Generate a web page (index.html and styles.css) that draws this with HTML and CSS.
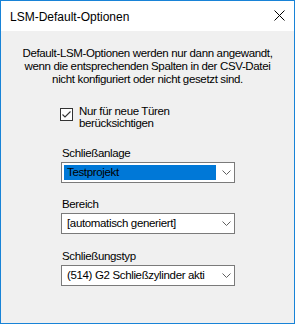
FILE: index.html
```html
<!DOCTYPE html>
<html lang="de">
<head>
  <meta charset="UTF-8" />
  <meta name="viewport" content="width=device-width, initial-scale=1.0"/>
  <title>LSM-Default-Optionen</title>
  <link rel="stylesheet" href="styles.css">
</head>
<body>

  <div class="window">
    <!-- Title bar -->
    <div class="titlebar">
      <span class="title">LSM-Default-Optionen</span>
      <span class="close">
        <svg width="11" height="11" viewBox="0 0 11 11">
          <path d="M0.5 0.5 L10.5 10.5 M10.5 0.5 L0.5 10.5" stroke="#000" stroke-width="1" fill="none"/>
        </svg>
      </span>
    </div>

    <div class="content">
      <p class="info">Default-LSM-Optionen werden nur dann angewandt,<br>wenn die entsprechenden Spalten in der CSV-Datei<br>nicht konfiguriert oder nicht gesetzt sind.</p>

      <div class="fields">
        <label class="check">
          <span class="box">
            <svg width="11" height="11" viewBox="0 0 11 11">
              <path d="M1.5 5.5 L4 8 L9.5 2.5" stroke="#333" stroke-width="1.1" fill="none"/>
            </svg>
          </span>
          <span class="check-text">Nur für neue Türen<br>berücksichtigen</span>
        </label>

        <div class="field">
          <div class="field-label">Schließanlage</div>
          <div class="combo">
            <span class="combo-value selected">Testprojekt</span>
            <span class="arrow"><svg width="9" height="5" viewBox="0 0 9 5"><path d="M0.5 0.5 L4.5 4.5 L8.5 0.5" stroke="#606060" fill="none"/></svg></span>
          </div>
        </div>

        <div class="field">
          <div class="field-label">Bereich</div>
          <div class="combo">
            <span class="combo-value">[automatisch generiert]</span>
            <span class="arrow"><svg width="9" height="5" viewBox="0 0 9 5"><path d="M0.5 0.5 L4.5 4.5 L8.5 0.5" stroke="#606060" fill="none"/></svg></span>
          </div>
        </div>

        <div class="field">
          <div class="field-label">Schließungstyp</div>
          <div class="combo">
            <span class="combo-value">(514) G2 Schließzylinder akti</span>
            <span class="arrow"><svg width="9" height="5" viewBox="0 0 9 5"><path d="M0.5 0.5 L4.5 4.5 L8.5 0.5" stroke="#606060" fill="none"/></svg></span>
          </div>
        </div>
      </div>
    </div>
  </div>

</body>
</html>
```

FILE: styles.css
```css
body {
  margin: 0;
  font-family: "Liberation Sans", Arial, sans-serif;
  font-size: 11.5px;
  letter-spacing: -0.35px;
  color: #000;
  background-color: #f0f0f0;
}

.window {
  width: 295px;
  height: 324px;
  box-sizing: border-box;
  border: 1px solid #1883d7;
  background-color: #f0f0f0;
  display: flex;
  flex-direction: column;
}

.titlebar {
  height: 30px;
  box-sizing: border-box;
  background-color: #fff;
  display: flex;
  align-items: flex-start;
  justify-content: space-between;
  padding: 9px 9px 0 9px;
}

.title {
  font-size: 12px;
  letter-spacing: 0;
  line-height: 14px;
}

.close {
  display: flex;
}

.content {
  flex: 1;
}

.info {
  margin: 16px 0 0 0;
  text-align: center;
  line-height: 13px;
}

.fields {
  margin-left: 60px;
  width: 174px;
}

.check {
  display: flex;
  align-items: flex-start;
  margin-top: 19px;
}

.box {
  width: 11px;
  height: 11px;
  border: 1px solid #333;
  background-color: #fff;
  display: flex;
  margin: 3px 0 0 -1px;
}

.check-text {
  margin-left: 6px;
  line-height: 12px;
}

.field {
  margin-top: 18px;
}

.field + .field {
  margin-top: 15px;
}

.field:last-child {
  margin-top: 16px;
}

.field-label {
  line-height: 13px;
  margin: 0 0 2px 1px;
}

.combo {
  height: 21px;
  box-sizing: border-box;
  border: 1px solid #7a7a7a;
  background-color: #fff;
  display: flex;
  align-items: center;
  padding: 0 3px 0 2px;
}

.combo-value {
  flex: 1;
  margin-right: 6px;
  padding-left: 3px;
  line-height: 15px;
  white-space: nowrap;
  overflow: hidden;
}

.combo-value.selected {
  background-color: #0078d7;
}

.arrow {
  display: flex;
}
```
